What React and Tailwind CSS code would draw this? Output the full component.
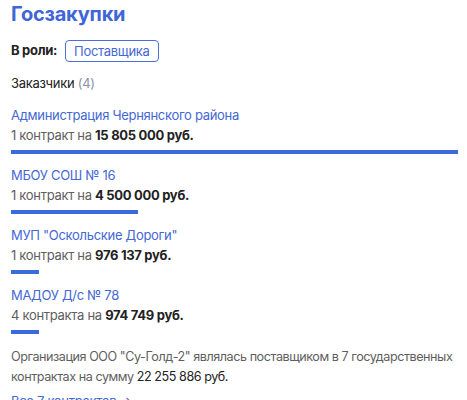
const customers = [
  { name: "Администрация Чернянского района", count: "1 контракт", sum: "15 805 000 руб.", value: 15805000 },
  { name: "МБОУ СОШ № 16", count: "1 контракт", sum: "4 500 000 руб.", value: 4500000 },
  { name: 'МУП "Оскольские Дороги"', count: "1 контракт", sum: "976 137 руб.", value: 976137 },
  { name: "МАДОУ Д/с № 78", count: "4 контракта", sum: "974 749 руб.", value: 974749 }
];

const maxValue = Math.max(...customers.map((c) => c.value));

function CustomerRow({ item }) {
  return (
    <div className="pb-[11px]">
      <a href="#" className="block text-[13px] leading-5 text-[#4468d4]">
        {item.name}
      </a>
      <p className="text-[13px] leading-5 text-[#5e5e5e]">
        {item.count} на <span className="font-bold text-[#222]">{item.sum}</span>
      </p>
      <div className="mt-[5px] h-1 bg-[#3b6bdb]" style={{ width: `${(item.value / maxValue) * 100}%` }} />
    </div>
  );
}

export default function App() {
  return (
    <section className="w-[467px] bg-white pl-[11px] pr-[9px] font-['Inter','Noto_Sans',sans-serif] tracking-[-0.3px]">
      <h2 className="text-[20px] font-bold leading-7 tracking-[-0.2px] text-[#3f66d8]">Госзакупки</h2>

      <div className="mt-3 flex items-center gap-2">
        <span className="text-[13px] font-bold text-[#222]">В роли:</span>
        <button
          type="button"
          className="h-[22px] rounded border border-[#4a6fd8] px-2 text-[13px] leading-5 text-[#4468d4]"
        >
          Поставщика
        </button>
      </div>

      <p className="mt-[11px] text-[13px] leading-5 text-[#222]">
        Заказчики <span className="text-[#8b93a8]">(4)</span>
      </p>

      <div className="mt-[12px]">
        {customers.map((item) => (
          <CustomerRow key={item.name} item={item} />
        ))}
      </div>

      <p className="mt-[2px] text-[12.6px] leading-5 tracking-[-0.45px] text-[#5e5e5e]">
        Организация ООО "Су-Голд-2" являлась поставщиком в 7 государственных контрактах на сумму{" "}
        <span className="text-[#222]">22 255 886 руб.</span>
      </p>

      <a href="#" className="mt-1 block text-[13px] leading-5 text-[#4468d4]">
        Все 7 контрактов →
      </a>
    </section>
  );
}
